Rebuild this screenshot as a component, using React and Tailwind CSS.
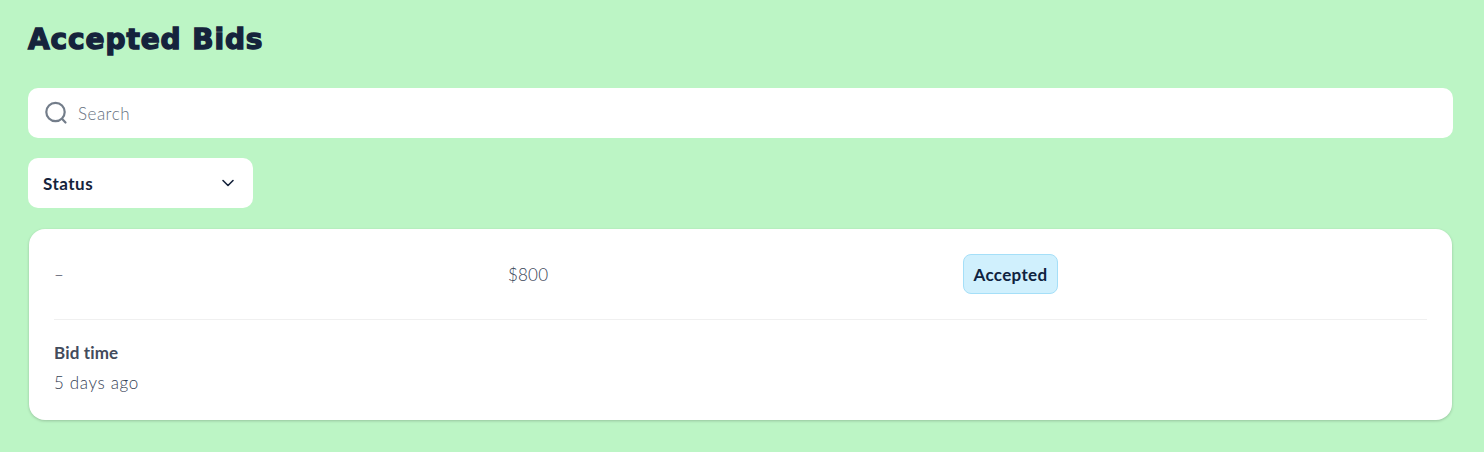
import React from "react";

export default function App() {
  return (
    <div className="w-[1484px] h-[452px] overflow-hidden bg-[#bcf5c5] pt-[23px] pl-[28px] pr-[31px] font-['Lato','Noto_Sans',sans-serif]">
      <h1 className="h-[33px] text-[28px] leading-[33px] font-bold tracking-[0.9px] text-[#15233c] font-['DejaVu_Sans',sans-serif] [-webkit-text-stroke:1.4px_#15233c]">
        Accepted Bids
      </h1>
      <div className="mt-[32px] h-[50px] rounded-[10px] bg-white flex items-center pl-[16px]">
        <svg width="24" height="24" viewBox="0 0 24 24" fill="none" stroke="#737d8a" strokeWidth="2.2" strokeLinecap="round">
          <circle cx="11.5" cy="11" r="9.2" />
          <path d="M18.2 18l3.3 3.5" />
        </svg>
        <span className="ml-[10px] pt-[2px] text-[17px] tracking-[0.5px] font-light text-[#65707e]">Search</span>
      </div>
      <div className="mt-[20px] w-[225px] h-[50px] rounded-[10px] bg-white flex items-center justify-between pl-[15px] pr-[18px]">
        <span className="pt-[2px] text-[17px] tracking-[0.5px] font-bold text-[#15233c]">Status</span>
        <svg width="14" height="14" viewBox="0 0 14 14" fill="none" stroke="#15233c" strokeWidth="1.6" strokeLinecap="round" strokeLinejoin="round">
          <path d="M2 4.5l5 5 5-5" />
        </svg>
      </div>
      <div className="mt-[21px] h-[191px] ml-px mr-px rounded-[16px] bg-white shadow-[0_1px_3px_rgba(0,0,0,0.2)] px-[25px] pt-[25px]">
        <div className="grid grid-cols-[454px_455px_1fr] items-center h-[40px] text-[17px] tracking-[0.2px] font-light text-[#364256]">
          <span className="pt-[2px]">–</span>
          <span className="pt-[2px]">$800</span>
          <span className="justify-self-start h-[40px] w-[95px] pt-[2px] flex items-center justify-center rounded-[8px] border border-[#a5dff8] bg-[#d0f0fd] text-[17px] tracking-[0.35px] font-bold text-[#0f2340]">
            Accepted
          </span>
        </div>
        <div className="mt-[25px] h-px bg-[#f0f0f0]" />
        <div className="mt-[23px] text-[17px] tracking-[0.15px] leading-[20px] font-bold text-[#434b5c]">Bid time</div>
        <div className="mt-[10px] text-[17px] tracking-[0.65px] leading-[20px] font-light text-[#364256]">5 days ago</div>
      </div>
    </div>
  );
}
